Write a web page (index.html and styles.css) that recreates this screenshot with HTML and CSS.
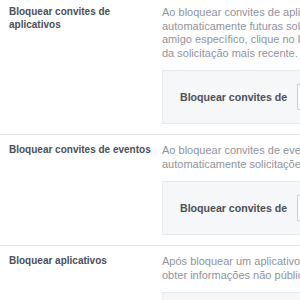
FILE: index.html
```html
<!DOCTYPE html>
<html lang="pt-BR">
<head>
<meta charset="utf-8">
<title>Bloqueio</title>
<link rel="stylesheet" href="styles.css">
</head>
<body>
<div class="page">
  <div class="section first">
    <div class="label">Bloquear convites de aplicativos</div>
    <div class="content">
      <p class="desc">Ao bloquear convites de aplicativos de alguém, você ignorará<br>automaticamente futuras solicitações de aplicativos desse amigo. Para bloquear convites de um<br>amigo específico, clique no link “Ignorar todos os convites deste amigo” abaixo<br>da solicitação mais recente.</p>
      <div class="box">
        <span class="box-label">Bloquear convites de</span>
        <input class="field" type="text" placeholder="Digite o nome de um amigo...">
      </div>
    </div>
  </div>
  <div class="section">
    <div class="label">Bloquear convites de eventos</div>
    <div class="content">
      <p class="desc">Ao bloquear convites de eventos de alguém, você ignorará<br>automaticamente solicitações de eventos desse amigo.</p>
      <div class="box">
        <span class="box-label">Bloquear convites de</span>
        <input class="field" type="text" placeholder="Digite o nome de um amigo...">
      </div>
    </div>
  </div>
  <div class="section">
    <div class="label">Bloquear aplicativos</div>
    <div class="content">
      <p class="desc">Após bloquear um aplicativo, ele não poderá mais entrar em contato com você nem<br>obter informações não públicas sobre você pelo Facebook. Saiba mais</p>
      <div class="box">
        <span class="box-label">Bloquear aplicativos</span>
        <input class="field" type="text" placeholder="Digite o nome de um aplicativo...">
      </div>
    </div>
  </div>
</div>
</body>
</html>
```
FILE: styles.css
```css
html, body {
  margin: 0;
  padding: 0;
  overflow: hidden;
  background: #ffffff;
}
.page {
  width: 740px;
  font-family: "Liberation Sans", Arial, sans-serif;
}
.section {
  display: grid;
  grid-template-columns: 147px 560px;
  column-gap: 6px;
  padding: 9px 0 10px 9px;
  border-top: 1px solid #e5e6e9;
}
.section.first {
  border-top: none;
  padding-top: 6px;
}
.label {
  font-size: 10px;
  line-height: 12.5px;
  font-weight: bold;
  color: #4b4f56;
}
.desc {
  margin: 0 0 10px 0;
  font-size: 11px;
  line-height: 13.5px;
  color: #90949c;
}
.box {
  display: flex;
  align-items: center;
  gap: 10px;
  height: 52px;
  padding-left: 17px;
  background: #f6f7f9;
  border: 1px solid #e9eaed;
}
.box-label {
  font-size: 10.6px;
  font-weight: bold;
  color: #4b4f56;
}
.field {
  width: 220px;
  height: 26px;
  box-sizing: border-box;
  border: 1px solid #ccd0d5;
  background: #ffffff;
  font-family: inherit;
  font-size: 11px;
  padding: 0 6px;
  color: #90949c;
}
.field::placeholder {
  color: #ffffff;
}
```
